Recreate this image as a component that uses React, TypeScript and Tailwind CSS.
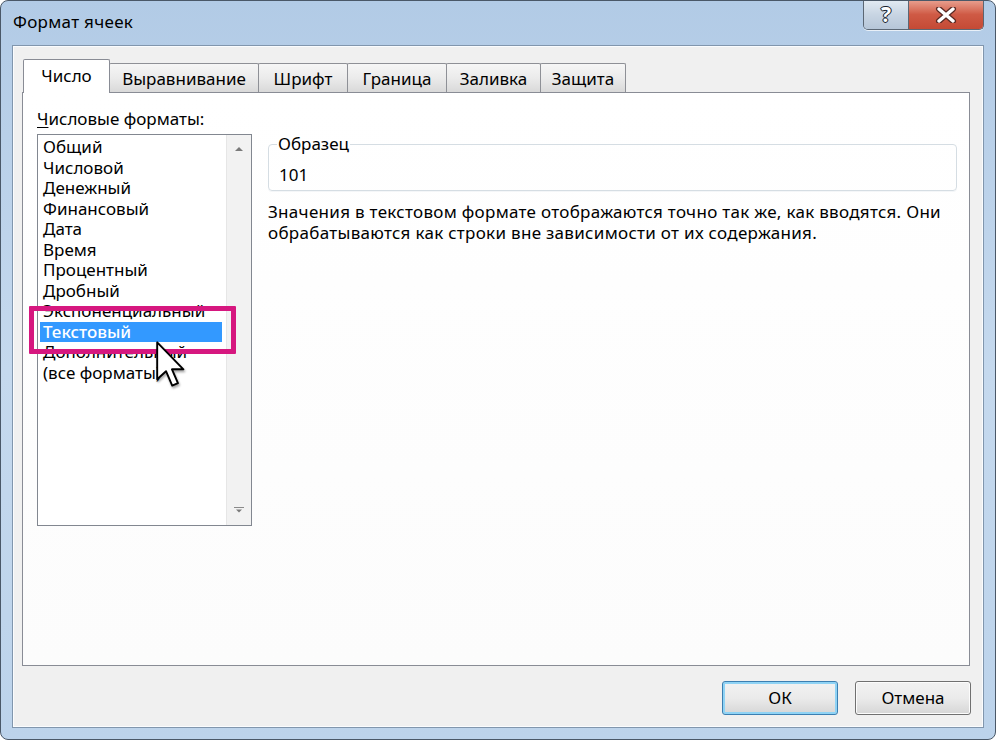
import React from "react";

const FORMATS = [
  "Общий",
  "Числовой",
  "Денежный",
  "Финансовый",
  "Дата",
  "Время",
  "Процентный",
  "Дробный",
  "Экспоненциальный",
  "Текстовый",
  "Дополнительный",
  "(все форматы)",
];

const TABS = [
  { label: "Число", w: "w-[87px]" },
  { label: "Выравнивание", w: "w-[150px]" },
  { label: "Шрифт", w: "w-[90px]" },
  { label: "Граница", w: "w-[100px]" },
  { label: "Заливка", w: "w-[95px]" },
  { label: "Защита", w: "w-[86px]" },
];

function Cursor() {
  return (
    <svg width="31" height="48" viewBox="0 0 13 20" className="drop-shadow-[1px_2px_1px_rgba(0,0,0,0.35)]">
      <path
        d="M0.5 0.5 L0.5 16 L4.2 12.6 L6.8 18.6 L9.2 17.6 L6.7 11.8 L11.5 11.8 Z"
        fill="#fff"
        stroke="#000"
        strokeWidth="0.8"
        strokeLinejoin="round"
      />
    </svg>
  );
}

function CloseGlyph() {
  return (
    <svg width="22" height="16" viewBox="0 0 22 16">
      <path d="M4 2 L18 14 M18 2 L4 14" stroke="#5a2a24" strokeWidth="6" strokeLinecap="round" />
      <path d="M4 2 L18 14 M18 2 L4 14" stroke="#fff" strokeWidth="3.4" strokeLinecap="round" />
    </svg>
  );
}

export default function App() {
  return (
    <div
      className="w-[996px] h-[740px] overflow-hidden rounded-[8px] border border-[#4a5868] bg-gradient-to-b from-[#b2cbe6] via-[#c5d9ee] to-[#bcd3eb] flex flex-col"
      style={{ fontFamily: '"Noto Sans", "Open Sans", sans-serif' }}
    >
      {/* title bar */}
      <div className="h-[44px] flex justify-between shrink-0">
        <div className="pl-[12px] pt-[9px] text-[17px] leading-[24px] text-black tracking-[0.3px]">Формат ячеек</div>
        <div className="flex h-[30px] mr-[11px] -mt-px rounded-b-[5px] border border-t-0 border-[#5b6774] overflow-hidden shadow-[0_1px_0_rgba(255,255,255,0.7)]">
          <div className="w-[45px] flex items-center justify-center bg-gradient-to-b from-[#e3ebf3] via-[#c8d5e3] to-[#b6c6d8] border-r border-[#5b6774]">
            <span className="text-[21px] leading-none font-bold text-white [text-shadow:0_0_1px_#1a2430,0_0_1px_#1a2430,1px_0_0_#1a2430,-1px_0_0_#1a2430,0_1px_0_#1a2430,0_-1px_0_#1a2430]">
              ?
            </span>
          </div>
          <div className="w-[74px] flex items-center justify-center bg-gradient-to-b from-[#e8a191] via-[#cf5a45] to-[#c44a35]">
            <CloseGlyph />
          </div>
        </div>
      </div>

      {/* client area */}
      <div className="flex-1 mx-[11px] mb-[11px] bg-[#f0f0f0] border border-[#8196ad] shadow-[inset_0_0_0_1px_#fafcfe] flex flex-col pt-[12px] pl-[10px] pr-[13px]">
        {/* tabs */}
        <div className="flex items-end h-[34px] text-[17px] text-black">
          {TABS.map((t, i) =>
            i === 0 ? (
              <div
                key={t.label}
                className={`${t.w} h-[34px] -mb-px relative z-10 bg-white border border-b-0 border-[#898c95] rounded-t-[2px] flex items-center justify-center pb-[2px]`}
              >
                {t.label}
              </div>
            ) : (
              <div
                key={t.label}
                className={`${t.w} h-[29px] -ml-px border border-b-0 border-[#8e9096] rounded-t-[2px] bg-gradient-to-b from-[#f6f6f6] via-[#ebebeb] to-[#d9d9d9] flex items-center justify-center pt-[1px]`}
              >
                {t.label}
              </div>
            )
          )}
        </div>

        {/* panel */}
        <div className="h-[574px] -ml-px bg-gradient-to-b from-white to-[#fcfcfc] border border-[#898c95] flex pt-[15px] pl-[14px] pr-[12px]">
          {/* left column */}
          <div className="w-[215px] relative">
            <div className="h-[26px] text-[17px] leading-[22px] text-black">
              <span className="underline underline-offset-2">Ч</span>исловые форматы:
            </div>
            <div className="h-[392px] border border-[#828790] bg-white flex">
              <div className="flex-1 pt-[2px] text-[17px] text-black">
                {FORMATS.map((f) =>
                  f === "Текстовый" ? (
                    <div key={f} className="h-[20.5px] leading-[20.5px] ml-[2px] mr-[4px] pl-[3px] bg-[#3399ff] text-white font-medium">
                      {f}
                    </div>
                  ) : (
                    <div key={f} className="h-[20.5px] leading-[20.5px] pl-[5px]">
                      {f}
                    </div>
                  )
                )}
              </div>
              <div className="w-[25px] bg-[#f2f2f2] border-l border-[#e6e6e6] flex flex-col items-center justify-between py-[11px]">
                <svg width="10" height="6" viewBox="0 0 10 6">
                  <path d="M1 5 L5 1 L9 5 Z" fill="#7a7a7a" />
                </svg>
                <svg width="12" height="8" viewBox="0 0 12 8">
                  <path d="M1 1.5 H11" stroke="#8a8a8a" strokeWidth="1" />
                  <path d="M3 3.5 L6 6.5 L9 3.5 Z" fill="#7a7a7a" />
                </svg>
              </div>
            </div>

            {/* highlight frame and mouse pointer */}
            <div className="absolute left-[-8px] top-[198px] w-[207px] h-[48px] border-[5px] border-[#d6177f] rounded-[1px]" />
            <div className="absolute left-[119px] top-[233px]">
              <Cursor />
            </div>
          </div>

          {/* right column */}
          <div className="flex-1 ml-[16px] pt-[26px]">
            <fieldset className="h-[57px] border border-[#d5dde3] rounded-[4px] pl-[8px] pr-[8px] shadow-[0_1px_0_#f4f6f8]">
              <legend className="px-[1px] text-[17px] leading-[20px] text-black">Образец</legend>
              <div className="pt-[11px] pl-[2px] text-[17px] leading-[20px] text-black">101</div>
            </fieldset>
            <p className="mt-[10px] text-[17px] leading-[21px] tracking-[0.3px] text-black">
              Значения в текстовом формате отображаются точно так же, как вводятся. Они
              <br />
              обрабатываются как строки вне зависимости от их содержания.
            </p>
          </div>
        </div>

        {/* buttons */}
        <div className="flex justify-end gap-[17px] pt-[15px] -mr-px">
          <button className="w-[116px] h-[34px] rounded-[3px] border border-[#3c7fb1] shadow-[inset_0_0_0_2px_#8fd3f5] bg-gradient-to-b from-[#f2f2f2] via-[#ebebeb] to-[#d6d6d6] text-[17px] text-black">
            ОК
          </button>
          <button className="w-[116px] h-[34px] rounded-[3px] border border-[#707070] shadow-[inset_0_0_0_1px_#fcfcfc] bg-gradient-to-b from-[#f2f2f2] via-[#ebebeb] to-[#d6d6d6] text-[17px] text-black">
            Отмена
          </button>
        </div>
      </div>
    </div>
  );
}
